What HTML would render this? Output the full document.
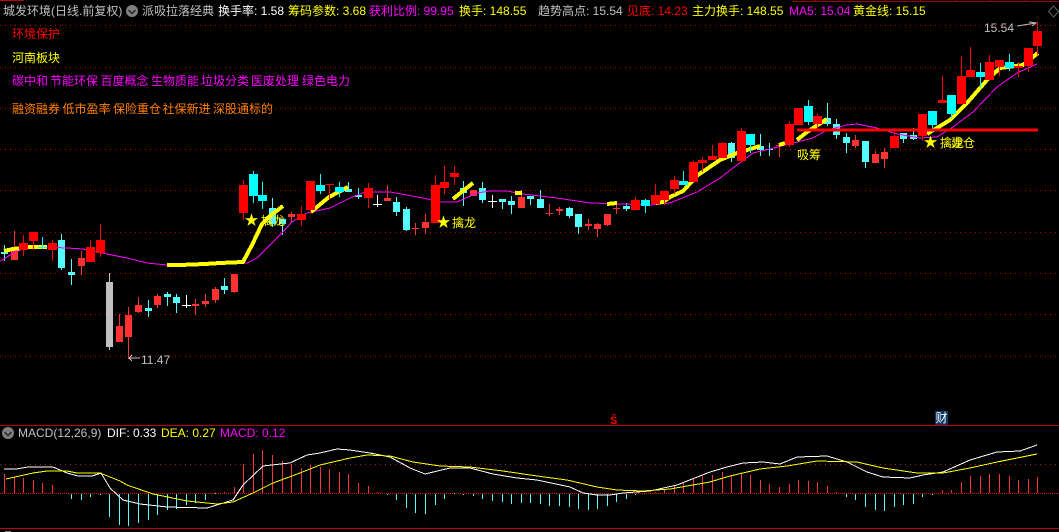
<!DOCTYPE html>
<html><head><meta charset="utf-8"><style>
html,body{margin:0;padding:0;background:#000;width:1059px;height:532px;overflow:hidden}
svg{display:block}
text{font-family:"Liberation Sans","WenQuanYi Zen Hei","Noto Sans CJK SC",sans-serif;font-size:12px}
.c{font-family:"WenQuanYi Zen Hei","Noto Sans CJK SC",sans-serif}
.k{shape-rendering:crispEdges;fill:none}
</style></head><body>
<svg width="1059" height="532" viewBox="0 0 1059 532" xmlns="http://www.w3.org/2000/svg">
<rect width="1059" height="532" fill="#000"/>
<path d="M0 .5H24" stroke="#c00000" class="k"/>
<path d="M793 1.5H1059M815.5 0V1M850.5 0V1M885.5 0V1M920.5 0V1M955.5 0V1M990.5 0V1M1025.5 0V1" stroke="#a00000" class="k"/>
<g stroke="#c00000" stroke-dasharray="1 4" class="k">
<path d="M0 25.5H1059M0 67.5H1059M0 108.5H1059M0 149.5H1059M0 190.5H1059M0 232.5H1059M0 273.5H1059M0 314.5H1059M0 356.5H1059"/>
</g>
<g stroke="#c00000" class="k"><path d="M0 425.5H1059M0 528.5H1059"/></g>
<path d="M0 464.5H1059" stroke="#a02020" stroke-dasharray="1 4" class="k"/>
<path d="M0 493.5H1059" stroke="#e00000" stroke-dasharray="1 1" class="k"/>
<path d="M5 531.5H11" stroke="#808080" class="k"/>

<!-- light candles -->
<g class="k" stroke="#ff3232">
<path d="M14.5 231V260M81.5 251V275M119.5 314V342M128.5 307V359M138.5 297V313M157.5 294V308M195.5 299V315M205.5 294V307M215.5 287V303M234.5 274V293M291.5 212V222M387.5 185V201M415.5 223V235M425.5 214V234M473.5 190V196M521.5 190V208M549.5 204V216M559.5 207V215M588.5 219V230M597.5 223V237M607.5 214V226M616.5 205V214M779.5 145V157M855.5 135V148M875.5 151V163M884.5 148V168"/>
<path stroke-width="7" d="M14.5 250V260M81.5 258V266M119.5 326V342M128.5 315V337M138.5 305V312M157.5 296V305M195.5 304V306M205.5 301V304M215.5 289V300M234.5 274V292M291.5 214V217M387.5 198V201M415.5 228V229M425.5 222V228M473.5 190V196M521.5 197V208M549.5 213V214M559.5 209V211M588.5 224V226M597.5 224V229M607.5 214V225M616.5 208V209M779.5 145V146M855.5 140V146M875.5 154V163M884.5 152V159"/>
</g>
<g class="k" stroke="#54fcfc">
<path d="M4.5 245V261M61.5 234V270M71.5 259V285M148.5 300V317M167.5 292V306M176.5 294V313M224.5 278V294M272.5 198V227M282.5 219V235M348.5 182V192M358.5 188V199M396.5 197V216M406.5 207V231M463.5 181V206M482.5 182V203M502.5 199V209M511.5 196V214M530.5 196V205M540.5 190V208M569.5 207V218M578.5 214V234M626.5 203V211M731.5 142V162M760.5 134V156M769.5 143V156M827.5 103V126M836.5 119V139M846.5 133V153M865.5 141V168M903.5 133V143M913.5 128V140"/>
<path stroke-width="7" d="M4.5 252V254M61.5 240V268M71.5 272V275M148.5 308V311M167.5 294V297M176.5 297V303M224.5 286V290M272.5 208V224M282.5 219V224M348.5 189V192M358.5 195V197M396.5 202V212M406.5 209V230M463.5 188V193M482.5 188V200M502.5 199V202M511.5 201V205M530.5 196V199M540.5 199V208M569.5 208V216M578.5 214V227M626.5 206V209M731.5 143V158M760.5 146V150M769.5 149V150M827.5 118V124M836.5 124V135M846.5 137V143M865.5 141V162M903.5 133V139M913.5 135V139"/>
</g>
<g class="k" stroke="#fff"><path d="M186.5 295V308M182 305.5H191M377.5 195V207M373 204.5H382M492.5 195V208M488 201.5H497"/></g>
<g class="k" stroke="#c0c0c0"><path d="M109.5 273V350"/><path stroke-width="7" d="M109.5 282V347"/></g>

<!-- MA5 -->
<polyline class="k" stroke="#ff00ff" stroke-width="1" points="0,261 4,259 13,253 23,249 43,247 67,248 83,249 107,254 127,258 147,263 167,265 247,263 257,258 267,248 280,235 292,222 300,217 307,213 330,208 350,198 365,192 390,192 423,198 440,202 457,202 477,193 490,191 507,191 523,194 557,198 590,203 623,204 650,205 670,203 697,192 720,178 737,165 753,153 770,149 793,143 813,138 827,130 847,125 857,124 877,128 897,134 920,138 937,137 953,127 973,112 997,87 1017,73 1037,64"/>

<!-- gold line -->
<g class="k" stroke="#ffff00" stroke-width="4" stroke-linejoin="round">
<polyline points="4,251 13,249 30,247 47,247"/>
<polyline points="167,265 180,265 205,264 220,263 243,262 252,245 262,224 270,216 283,206"/>
<polyline points="311,212 329,197 348,187"/>
<polyline points="453,199 473,183"/>
<polyline points="515,193 522,193"/>
<polyline points="607,204 617,203"/>
<polyline points="655,203 663,202 670,197 683,191 698,175 720,160 737,153 760,146"/>
<polyline points="779,145 785,143"/>
<polyline points="797,140 807,132 827,119"/>
<polyline points="927,134 950,120 967,103 987,80 1000,68 1023,65 1038,53"/>
</g>

<!-- bright candles -->
<g class="k" stroke="#ff0000">
<path d="M23.5 235V256M33.5 232V250M52.5 240V261M90.5 240V262M100.5 224V257M243.5 180V220M301.5 206V226M310.5 181V214M329.5 184V199M368.5 183V208M435.5 175V223M444.5 166V194M454.5 166V185M635.5 197V210M655.5 184V205M664.5 191V205M674.5 176V194M693.5 161V182M702.5 157V172M712.5 145V160M722.5 142V158M741.5 128V162M789.5 121V147M798.5 108V125M817.5 114V130M894.5 128V148M922.5 114V141M942.5 76V103M961.5 56V104M970.5 47V77M989.5 55V80M999.5 60V76M1018.5 62V77M1028.5 48V72M1037.5 22V55"/>
<path stroke-width="9" d="M23.5 243V250M33.5 232V241M52.5 243V250M90.5 247V262M100.5 240V253M243.5 185V213M301.5 214V220M310.5 181V210M329.5 184V185M368.5 188V198M435.5 185V223M444.5 182V188M454.5 173V177M635.5 200V210M655.5 195V204M664.5 191V200M674.5 180V189M693.5 162V182M702.5 160V163M712.5 156V160M722.5 143V158M741.5 131V161M789.5 124V145M798.5 108V125M817.5 116V124M894.5 136V148M922.5 114V136M942.5 100V103M961.5 76V104M970.5 70V77M989.5 62V80M999.5 60V67M1018.5 66V68M1028.5 48V66M1037.5 31V46"/>
</g>
<g class="k" stroke="#00ffff">
<path d="M42.5 237V249M253.5 171V203M262.5 182V209M320.5 174V194M339.5 182V197M645.5 199V213M683.5 171V185M750.5 134V153M808.5 100V125M932.5 111V133M951.5 95V119M980.5 63V88M1009.5 54V71"/>
<path stroke-width="9" d="M42.5 247V248M253.5 174V196M262.5 195V201M320.5 185V191M339.5 187V192M645.5 200V206M683.5 181V185M750.5 134V145M808.5 106V122M932.5 111V125M951.5 95V114M980.5 72V77M1009.5 62V68"/>
</g>
<path d="M797 130H1038" stroke="#ff0000" stroke-width="3" class="k"/>

<!-- chart labels -->
<g fill="#ffff00">
<text x="244.5" y="225" style="font-size:14px">★</text><text class="c" x="261" y="225">擒龙</text>
<text x="436.5" y="227" style="font-size:14px">★</text><text class="c" x="452" y="227">擒龙</text>
<text x="923.5" y="147" style="font-size:14px">★</text><text class="c" x="940" y="147">擒龙</text><text class="c" x="951" y="147">建仓</text>
<text class="c" x="797" y="159">吸筹</text>
</g>
<text x="984" y="32" fill="#c0c0c0">15.54</text>
<path d="M1017 26L1036 23M1029 22L1036 23L1032 26" fill="none" stroke="#c0c0c0"/>
<text x="141" y="364" fill="#c0c0c0">11.47</text>
<path d="M129 358H140M129 358L132 355M129 358L132 361" fill="none" stroke="#c0c0c0" class="k"/>

<!-- left block names -->
<text class="c" x="12" y="38" fill="#ff0000">环境保护</text>
<text class="c" x="12" y="62" fill="#ffff00">河南板块</text>
<text class="c" y="85" fill="#ff00ff"><tspan x="12">碳中和</tspan><tspan x="50">节能环保</tspan><tspan x="100.5">百度概念</tspan><tspan x="151">生物质能</tspan><tspan x="201">垃圾分类</tspan><tspan x="251">医废处理</tspan><tspan x="302">绿色电力</tspan></text>
<text class="c" y="113" fill="#ff8000"><tspan x="12">融资融券</tspan><tspan x="62.5">低市盈率</tspan><tspan x="113">保险重仓</tspan><tspan x="162.5">社保新进</tspan><tspan x="213">深股通标的</tspan></text>

<!-- header -->
<g>
<text x="3" y="15" fill="#c0c0c0">城发环境(日线.前复权)</text>
<circle cx="132" cy="11" r="6" fill="#808080"/><path d="M128.5 10L132 13.5L135.5 10" fill="none" stroke="#222" stroke-width="1.4"/>
<text x="142" y="15" fill="#c0c0c0">派吸拉落经典</text>
<text x="218" y="15" fill="#ffffff">换手率: 1.58</text>
<text x="288" y="15" fill="#ffff00">筹码参数: 3.68</text>
<text x="369" y="15" fill="#ff00ff">获利比例: 99.95</text>
<text x="459" y="15" fill="#ffff00">换手: 148.55</text>
<text x="538" y="15" fill="#c0c0c0">趋势高点: 15.54</text>
<text x="627" y="15" fill="#ff0000">见底: 14.23</text>
<text x="692" y="15" fill="#ffff00">主力换手: 148.55</text>
<text x="789" y="15" fill="#ff00ff">MA5: 15.04</text>
<text x="853" y="15" fill="#ffff00">黄金线: 15.15</text>
<path d="M1053.5 6L1058.5 11.5L1053.5 17L1048.5 11.5Z" fill="none" stroke="#606060"/>
</g>

<!-- markers -->
<text x="610" y="424" fill="#ff0000" style="font-size:11px;font-weight:bold">Ŝ</text>
<rect x="935" y="411" width="13" height="14" fill="#0a3766"/>
<text class="c" x="935.5" y="422" fill="#fff">财</text>

<!-- MACD header -->
<circle cx="8" cy="433" r="6" fill="#808080"/><path d="M4.5 432L8 435.5L11.5 432" fill="none" stroke="#222" stroke-width="1.4"/>
<text x="18" y="437" fill="#c0c0c0">MACD(12,26,9)</text>
<text x="107" y="437" fill="#ffffff">DIF: 0.33</text>
<text x="161" y="437" fill="#ffff00">DEA: 0.27</text>
<text x="220" y="437" fill="#ff00ff">MACD: 0.12</text>

<!-- MACD bars -->
<g class="k" stroke="#ff3232">
<path d="M4.5 474V493M14.5 477V493M23.5 478V493M33.5 480V493M42.5 483V493M52.5 485V493M224.5 492V493M234.5 487V493M243.5 464V493M253.5 454V493M262.5 450V493M272.5 455V493M282.5 461V493M291.5 464V493M301.5 468V493M310.5 465V493M320.5 467V493M329.5 469V493M339.5 472V493M348.5 474V493M358.5 483V493M368.5 486V493M377.5 492V493M655.5 492V493M664.5 489V493M674.5 485V493M683.5 483V493M693.5 479V493M702.5 476V493M712.5 475V493M722.5 472V493M731.5 476V493M741.5 473V493M750.5 475V493M760.5 480V493M769.5 484V493M779.5 487V493M789.5 484V493M798.5 480V493M808.5 481V493M817.5 482V493M827.5 486V493M836.5 492V493M942.5 490V493M951.5 490V493M961.5 482V493M970.5 476V493M980.5 476V493M989.5 474V493M999.5 474V493M1009.5 476V493M1018.5 480V493M1028.5 479V493M1037.5 477V493"/>
</g>
<g class="k" stroke="#54fcfc">
<path d="M71.5 494V499M81.5 494V500M90.5 494V497M100.5 494V495M109.5 494V517M119.5 494V525M128.5 494V526M138.5 494V523M148.5 494V520M157.5 494V515M167.5 494V510M176.5 494V509M186.5 494V505M195.5 494V503M205.5 494V500M215.5 493V494M387.5 494V495M396.5 494V500M406.5 494V508M415.5 494V513M425.5 494V514M435.5 494V505M444.5 494V499M454.5 493V494M463.5 494V495M473.5 494V496M482.5 494V499M492.5 494V501M502.5 494V502M511.5 494V504M521.5 494V503M530.5 494V503M540.5 494V504M549.5 494V506M559.5 494V506M569.5 494V507M578.5 494V509M588.5 494V510M597.5 494V509M607.5 494V506M616.5 494V502M626.5 494V499M635.5 494V495M846.5 494V497M855.5 494V500M865.5 494V507M875.5 494V510M884.5 494V511M894.5 494V507M903.5 494V505M913.5 494V504M922.5 494V497M932.5 494V495"/>
</g>

<!-- MACD lines -->
<polyline class="k" stroke="#fff" stroke-width="1" points="4,469 16,469 28,467 53,467 67,473 78,476 92,476 101,473 110,488 123,500 140,504 167,507 207,508 233,500 243,485 263,466 290,463 307,455 320,453 337,449 350,450 370,453 390,457 410,468 425,474 450,468 470,468 493,474 517,478 537,480 570,487 583,493 597,495 610,495 623,493 650,491 677,485 710,472 727,467 743,463 763,462 780,464 797,457 827,456 847,462 867,472 883,477 910,478 923,475 943,472 970,460 997,452 1020,451 1037,445"/>
<polyline class="k" stroke="#ffff00" stroke-width="1" points="6,479 33,473 47,471 67,471 77,473 100,473 120,481 127,485 153,494 187,501 217,504 233,502 253,493 273,483 300,473 320,465 350,458 367,455 390,456 413,462 440,466 470,467 503,471 537,476 567,480 597,487 617,490 643,491 670,489 710,482 730,476 760,469 787,466 817,461 857,462 883,468 917,473 943,473 970,468 997,462 1037,454"/>
</svg>
</body></html>
